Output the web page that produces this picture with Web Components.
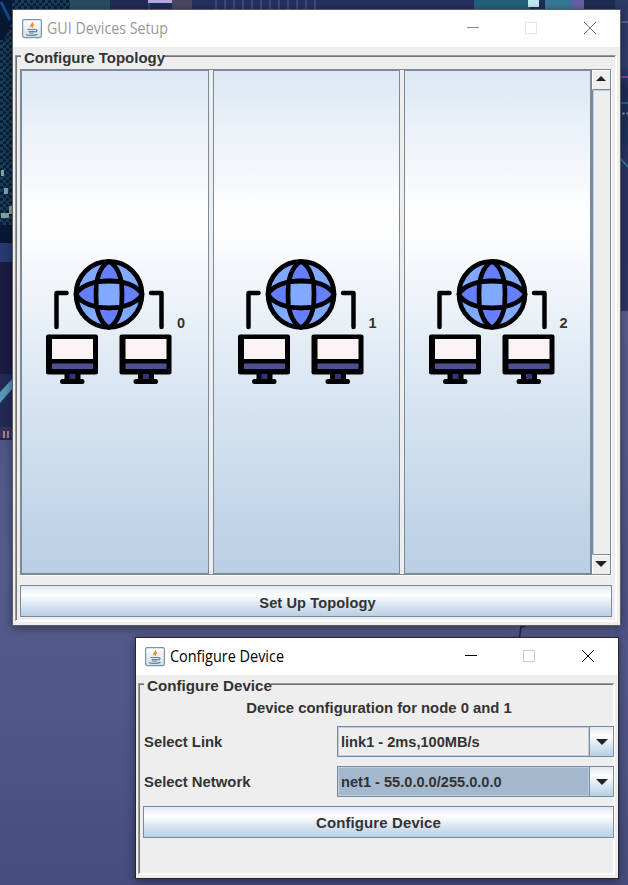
<!DOCTYPE html>
<html lang="en"><head><meta charset="utf-8"><title>GUI Devices Setup</title>
<style>
html,body{margin:0;height:100%;overflow:hidden}
body{font-family:"Liberation Sans",Arial,sans-serif;color:#333}
</style></head><body>
<desk-top>
  <app-window style="left:13px;top:10px;width:607px;height:615px;--tc:#999;--bc:#5b5b62;--mc:#888;--xc:#777;--max:#e4e4e4" heading="GUI Devices Setup" measure="121">
    <titled-panel legend="Configure Topology" measure="141" style="--pad:13px 3px 3px 4px;--gap:10px;--h:563px;--top:8px;--lw:143px">
      <scroll-pane>
        <device-button>0</device-button><device-button style="--in:23.5px">1</device-button><device-button style="--in:23.5px">2</device-button>
      </scroll-pane>
      <metal-button style="font-size:14.6px;padding:3px 0 0 3px">Set Up Topology</metal-button>
    </titled-panel>
  </app-window>
  <app-window style="left:136px;top:638px;width:482px;height:240px;--tc:#000;--bc:#26262e;--mc:#000;--xc:#000;--max:#ccc" heading="Configure Device" measure="114">
    <titled-panel legend="Configure Device" measure="125" style="--pad:13px 0 0 4px;--gap:9px;--h:188px;--top:8px;--lw:127px">
      <form-note>Device configuration for node 0 and 1</form-note>
      <combo-row label="Select Link">link1 - 2ms,100MB/s</combo-row>
      <combo-row label="Select Network" style="--fill:#a3b8cc">net1 - 55.0.0.0/255.0.0.0</combo-row>
      <metal-button style="margin-right:-1px">Configure Device</metal-button>
    </titled-panel>
  </app-window>
</desk-top>
<script>
const GRAD='linear-gradient(#dde8f3 0%,#fff 30%,#dde8f3 60%,#b8cfe5 100%)';
const define=(name,render)=>customElements.define(name,class extends HTMLElement{
  connectedCallback(){ if(!this.shadowRoot) this.attachShadow({mode:'open'}).innerHTML='<style>*{box-sizing:border-box}:host{box-sizing:border-box}</style>'+render(this); }
});

define('desk-top',()=>`<style>
:host{display:block;position:relative;width:628px;height:885px;overflow:hidden;background:linear-gradient(#1b2e52 0,#25315d 200px,#303866 390px,#4f5688 440px,#565d8e 560px,#515789 700px,#464c7d 885px)}
svg{position:absolute;inset:0}
</style>
<svg width="628" height="885">
 <defs>
  <pattern id="mesh" width="6" height="6" patternUnits="userSpaceOnUse"><rect width="6" height="6" fill="#173f5b"/><circle cx="1.5" cy="1.5" r="1.6" fill="#0a1b32"/><circle cx="4.5" cy="4.5" r="1.6" fill="#0a1b32"/></pattern>
  <linearGradient id="right" x2="0" y2="1"><stop offset="0" stop-color="#2c3a66"/><stop offset=".1" stop-color="#313d6e"/><stop offset=".14" stop-color="#1d2b52"/><stop offset=".21" stop-color="#1c3357"/><stop offset=".25" stop-color="#2b3466"/><stop offset=".485" stop-color="#2e3465"/><stop offset=".487" stop-color="#5a5e8f"/><stop offset="1" stop-color="#4d5286"/></linearGradient>
 </defs>
 <rect width="120" height="238" fill="url(#mesh)"/>
 <path d="M0 0h12v22L4 40H0z" fill="#071a35"/><path d="M1 2l9 18" stroke="#14488a" stroke-width="3"/>
 <rect y="225" width="13" height="20" fill="#0a1838"/>
 <rect y="243" width="13" height="20" fill="#283a72"/><rect y="262" width="13" height="112" fill="#1b1c42"/>
 <g fill="#7fa3a0"><rect x="1" y="170" width="3" height="6"/><rect x="4" y="188" width="4" height="6"/><rect x="1" y="213" width="8" height="5"/><rect x="9" y="206" width="3" height="8"/></g>
 <rect y="374" width="13" height="66" fill="#242a56"/><path d="M0 392l13-14v10L0 403z" fill="#5597b9"/>
 <rect y="427" width="13" height="11" fill="#3c315a"/><path d="M4 431v7M8 431v7" stroke="#9b8793" stroke-width="2"/>
 <rect x="615" width="13" height="640" fill="url(#right)"/>
 <path d="M620 22h8" stroke="#53638b" stroke-width="2"/><path d="M620 77h8" stroke="#7046a8" stroke-width="2"/>
 <path d="M620 103h8" stroke="#2a5a80" stroke-width="2"/><path d="M620 158l8 9" stroke="#2a8a92" stroke-width="1.500"/><path d="M622.500 113.500h5" stroke="#8ba2b8" stroke-width="2" stroke-dasharray="2 2"/>
 <path d="M519.500 638l1.500-11.500h4" fill="none" stroke="#202443" stroke-width="1.500"/>
</svg><svg width="628" height="10"><rect x="70" width="80" height="10" fill="#284d62"/><rect x="110" width="38" height="10" fill="#232a55"/><rect x="148" width="24" height="3" fill="#b7a5e4"/><rect x="172" width="20" height="10" fill="#4b4664"/><rect x="192" width="282" height="10" fill="#26305e"/><path d="M215 5h108" stroke="#3a4a7c" stroke-width="10" stroke-dasharray="2 7"/><rect x="474" width="56" height="10" fill="#24607b"/><rect x="528" width="11" height="7" fill="#bdeaf1"/><rect x="545" width="30" height="10" fill="#367895"/><rect x="572" width="12" height="10" fill="#6660a4"/></svg><slot></slot>`);

define('app-window',e=>`<style>
:host{position:absolute;display:flex;flex-direction:column;background:#eee;box-shadow:0 0 0 1px var(--bc),0 2px 9px 1px #0006}
header{height:37px;flex:none;background:#fff;display:flex;align-items:center;color:var(--tc);font:16px "Open Sans","Noto Sans",sans-serif}
.java{margin-left:9px;width:20px;height:20px;flex:none}
.t{margin-left:5px;flex:1;white-space:nowrap}
.t svg{display:block}
.c{flex:none;display:block}
</style>
<header><svg class="java" viewBox="0 0 20 20"><defs><linearGradient id="g" x2="0" y2="1"><stop stop-color="#fff"/><stop offset="1" stop-color="#d5dce3"/></linearGradient></defs><rect x=".6" y=".6" width="18.8" height="18" rx="1.5" fill="url(#g)" stroke="#7893ab" stroke-width="1.2"/><path d="M10.500 3.200c1 2-3 2.600-1.500 4.800M12 5.500c-2 1-2.200 1.800-1.100 3" fill="none" stroke="#ed8b3a" stroke-width="1.400"/><path d="M5.500 10.500h8M6.500 12.500h6.500M7 14h5M13.500 10.500c2.500 0 1.500 2.500-.8 2.500M4 15.500c2 1.300 9 1.300 11.500-.2" fill="none" stroke="#5d7f9c" stroke-width="1.200"/></svg>
<span class="t"><svg width="200" height="24"><text x="0" y="17" fill="currentColor" textLength="${e.getAttribute('measure')}" lengthAdjust="spacingAndGlyphs">${e.getAttribute('heading')}</text></svg></span>
<svg class="c" width="153" height="37" shape-rendering="crispEdges" fill="none"><path d="M0 17.500h12" style="stroke:var(--mc)"/><rect x="58.500" y="12.500" width="11" height="11" style="stroke:var(--max)"/><path d="M117 12l12 12M129 12l-12 12" shape-rendering="auto" style="stroke:var(--xc)"/></svg></header>
<slot></slot>`);

define('titled-panel',e=>`<style>
:host{display:flex;flex-direction:column;position:relative;margin:var(--top) 3px 0 2px;height:calc(var(--h) + 4px);padding:var(--pad);gap:var(--gap);border:solid;border-width:1px 2px 2px 1px;border-color:#9a9a9a #fff #fff #9a9a9a;box-shadow:inset 1px 1px #747474;font-weight:bold;font-size:15px}
.l{position:absolute;isolation:isolate;left:5px;top:-8px;height:20px;padding:0 0 0 3px;white-space:nowrap}
.l:before{content:"";position:absolute;left:0;top:6px;height:5px;width:var(--lw);background:#eee;z-index:-1}
.l svg{display:block;position:relative}
</style><div class="l"><svg width="160" height="20"><text x="0" y="14.500" fill="currentColor" textLength="${e.getAttribute('measure')}" lengthAdjust="spacingAndGlyphs">${e.getAttribute('legend')}</text></svg></div><slot></slot>`);

define('metal-button',()=>`<style>
:host{display:flex;flex:none;align-items:center;justify-content:center;height:32px;border:1px solid #7a8a99;background:${GRAD};font-size:15px;font-weight:bold;letter-spacing:.1px}
</style><slot></slot>`);

define('scroll-pane',()=>`<style>
:host{display:flex;height:506px;width:591px;flex:none;border:1px solid #7a8a99;box-shadow:1px 1px #fff}
.v{display:grid;grid-template-columns:188px 187px 187px;gap:4px;width:571px;flex:none;border-right:1px solid #7a8a99}
.b{flex:1;display:flex;flex-direction:column}
.a{height:20px;border-bottom:1px solid #7a8a99;border-top:1px solid #fff;border-left:1px solid #fff;display:grid;justify-content:center;padding:5px 2px 0 0;align-content:start}
.m{flex:1;border-left:1px solid #7a8a99;box-shadow:inset 1px 1px #b8cfe5}
.d{border-top:1px solid #7a8a99;border-bottom:0;box-shadow:inset 0 1px #fff;padding-top:6px}
svg{display:block}
</style><div class="v"><slot></slot></div><div class="b"><div class="a"><svg width="10" height="5"><path d="M0 5L5 0l5 5z" fill="#222"/></svg></div><div class="m"></div><div class="a d"><svg width="12" height="6"><path d="M0 0h12L6 6z" fill="#222"/></svg></div></div>`);

define('device-button',()=>`<style>
:host{display:flex;align-items:center;justify-content:flex-start;padding-left:var(--in,24px);border:1px solid #7a8a99;background:${GRAD};font-size:14.5px;font-weight:bold}
svg{display:block;flex:none;margin-left:-1px}span{margin:2px 0 0 4px}
</style>
<svg width="128" height="128" fill="none" stroke="#000" stroke-linecap="round" stroke-linejoin="round">
<g stroke-width="4.700"><circle cx="64" cy="36.300" r="33" fill="#80a9ff"/>
<path d="M64 3.500C46 12 46 61 64 69.500C82 61 82 12 64 3.500Z" fill="#657fff"/>
<path d="M31 36.300C40 18.500 88 18.500 97 36.300C88 54.500 40 54.500 31 36.300Z" fill="#657fff"/>
<path d="M51.400 23.800Q64 22.400 76.600 23.800Q77.400 36.300 76.600 49Q64 50.600 51.400 49Q50.600 36.300 51.400 23.800Z" fill="#80a9ff"/></g>
<path d="M21.500 35H11.500V69M106 35H116.500V69" stroke-width="4.500"/>
<g id="m" stroke="none"><rect x="1" y="76.500" width="52" height="40" rx="2" fill="#000"/><rect x="7" y="81" width="41" height="20" fill="#fbf2f3"/><rect x="7" y="105.500" width="41" height="5.500" fill="#505090"/><rect x="19.500" y="115" width="16" height="8" fill="#000"/><rect x="24.500" y="116" width="6" height="5.500" fill="#343477"/><rect x="15" y="121" width="24.500" height="5" rx="2.500" fill="#000"/></g>
<use href="#m" x="73.500"/></svg><span><slot></slot></span>`);

define('form-note',()=>`<style>:host{display:flex;justify-content:center;height:22px;line-height:22px;margin-bottom:-2px;padding-left:2px;font-size:14.850px}</style><slot></slot>`);

define('combo-row',e=>`<style>
:host{display:grid;grid-template-columns:194px 277px;height:31px;flex:none;align-items:center;font-size:14.600px}
label{padding-left:1px;font-size:14.850px}
.c{display:flex;height:31px;border:1px solid #7a8a99}
.f{flex:1;border:1px solid #b8cfe5;background:var(--fill,#eee);line-height:28px;padding-left:2px;white-space:nowrap}
.b{width:24px;border-left:1px solid #7a8a99;background:${GRAD};display:grid;place-items:center}
</style><label>${e.getAttribute('label')}</label><div class="c"><div class="f"><slot></slot></div><div class="b"><svg width="12" height="6"><path d="M0 0h12L6 6z" fill="#222"/></svg></div></div>`);
</script></body></html>
